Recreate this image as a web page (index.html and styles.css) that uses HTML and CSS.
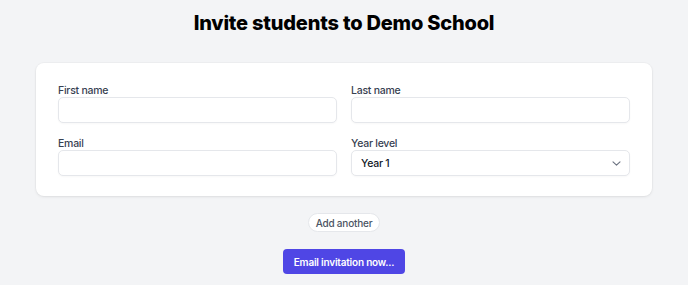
FILE: index.html
```html
<!DOCTYPE html>
<html lang="en">
<head>
  <meta charset="UTF-8">
  <meta name="viewport" content="width=device-width, initial-scale=1.0">
  <title>Invite students</title>
  <link rel="stylesheet" href="styles.css">
</head>
<body>
  <div class="page">
    <h1 class="page-title">Invite students to Demo School</h1>
    <form class="invite-card">
      <div class="field">
        <label for="first-name">First name</label>
        <input type="text" id="first-name">
      </div>
      <div class="field">
        <label for="last-name">Last name</label>
        <input type="text" id="last-name">
      </div>
      <div class="field">
        <label for="email">Email</label>
        <input type="email" id="email">
      </div>
      <div class="field">
        <label for="year-level">Year level</label>
        <div class="select-wrap">
          <select id="year-level">
            <option>Year 1</option>
            <option>Year 2</option>
            <option>Year 3</option>
          </select>
          <svg class="chevron" width="9" height="5" viewBox="0 0 9 5"><path d="M1 0.8l3.5 3.4 3.5-3.4" fill="none" stroke="#6b7280" stroke-width="1.1" stroke-linecap="round" stroke-linejoin="round"/></svg>
        </div>
      </div>
    </form>
    <div class="actions">
      <button type="button" class="add-btn">Add another</button>
      <button type="button" class="send-btn">Email invitation now...</button>
    </div>
  </div>
</body>
</html>
```

FILE: styles.css
```css
body { margin: 0; background: #f3f4f6; font-family: Inter, "Noto Sans", sans-serif; color: #111827; }
.page { padding: 10px 36px 0; }
.page-title { margin: 0; text-align: center; font-size: 20px; line-height: 26px; font-weight: 800; color: #000; letter-spacing: -0.2px; }
.invite-card { margin-top: 27px; background: #fff; border-radius: 8px; box-shadow: 0 1px 3px rgba(0,0,0,0.08), 0 0 0 1px rgba(0,0,0,0.02); padding: 22px 22px 20px; display: grid; grid-template-columns: 1fr 1fr; column-gap: 14px; row-gap: 15px; }
.field { display: flex; flex-direction: column; }
.field label { font-size: 10.5px; line-height: 12px; font-weight: 500; color: #374151; margin-bottom: 0; letter-spacing: -0.25px; }
.field input, .field select { box-sizing: border-box; width: 100%; height: 26px; border: 1px solid #e5e7eb; border-radius: 5px; background: #fff; font-family: inherit; font-size: 10.5px; font-weight: 500; color: #111827; letter-spacing: -0.25px; padding: 0 9px; box-shadow: 0 1px 2px rgba(0,0,0,0.03); }
.select-wrap { position: relative; }
.field select { appearance: none; -webkit-appearance: none; outline: none; }
.chevron { position: absolute; right: 9px; top: 11px; pointer-events: none; }
.actions { display: flex; flex-direction: column; align-items: center; }
.add-btn { margin-top: 17px; height: 19px; padding: 0 7px; border: 1px solid #e5e7eb; border-radius: 10px; background: #fff; font-family: inherit; font-size: 10px; font-weight: 500; color: #4b5563; letter-spacing: -0.2px; }
.send-btn { margin-top: 17px; height: 25px; padding: 0 11px; border: none; border-radius: 4px; background: #4f46e5; color: #fff; font-family: inherit; font-size: 10px; font-weight: 600; letter-spacing: -0.2px; }
```
